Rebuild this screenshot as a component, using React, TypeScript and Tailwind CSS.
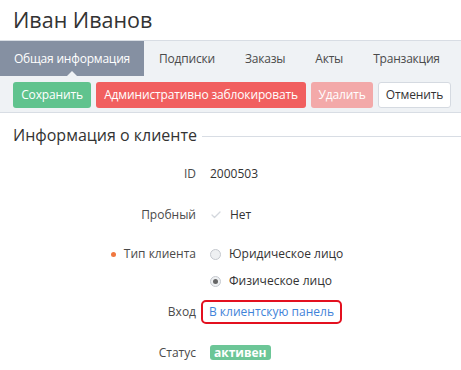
import { Check } from 'lucide-react';

const TABS = ['Общая информация', 'Подписки', 'Заказы', 'Акты', 'Транзакция'];

function Row({ label, required, children, className = '' }: { label: string; required?: boolean; children: React.ReactNode; className?: string }) {
  return (
    <div className={`flex items-start ${className}`}>
      <div className="w-[196px] shrink-0 flex items-center justify-end gap-[8px] text-[12px] text-[#4a4a4a] leading-[20px] whitespace-nowrap">
        {required && <span className="w-[5px] h-[5px] rounded-full bg-[#f0773f]" />}
        {label}
      </div>
      <div className="pl-[14px] text-[12px] text-[#333] leading-[20px] whitespace-nowrap">{children}</div>
    </div>
  );
}

export default function App() {
  return (
    <div className="w-[461px] h-[370px] bg-white overflow-hidden" style={{ fontFamily: '"Open Sans", sans-serif' }}>
      {/* Заголовок */}
      <div className="h-[40px] flex items-center px-[13px] pb-[1px] text-[21.5px] text-[#333] leading-none">Иван Иванов</div>

      {/* Вкладки */}
      <div className="h-[36px] flex border-t border-[#d8dde4] bg-[#eff2f5] whitespace-nowrap text-[12px] tracking-[-0.2px]">
        {TABS.map((t, i) => (
          <div
            key={t}
            className={`relative shrink-0 flex items-center ${i === 0 ? 'w-[144px] justify-center bg-[#8590a2] text-white' : 'text-[#4a4a4a] px-[15px]'}`}
          >
            {t}
            {i === 0 && (
              <span className="absolute bottom-0 left-1/2 -translate-x-1/2 w-0 h-0 border-x-[5px] border-x-transparent border-b-[5px] border-b-[#eff2f5]" />
            )}
          </div>
        ))}
      </div>

      {/* Кнопки */}
      <div className="h-[37px] flex items-start gap-[5px] pt-[6px] px-[13px] bg-[#eff2f5] border-b border-[#d8dde4] whitespace-nowrap text-[12px] tracking-[-0.15px]">
        <button className="shrink-0 w-[78px] h-[26px] rounded-[3px] bg-[#60c38e] text-white">Сохранить</button>
        <button className="shrink-0 w-[210px] h-[26px] rounded-[3px] bg-[#f15f5f] text-white">Административно заблокировать</button>
        <button className="shrink-0 w-[62px] h-[26px] rounded-[3px] bg-[#f3a9a9] text-white">Удалить</button>
        <button className="shrink-0 w-[73px] h-[26px] rounded-[3px] bg-white border border-[#d5dae1] text-[#333]">Отменить</button>
      </div>

      {/* Информация о клиенте */}
      <div className="flex items-center gap-[5px] pl-[13px] pt-[10px]">
        <span className="text-[16px] text-[#333] leading-[24px] whitespace-nowrap">Информация о клиенте</span>
        <div className="flex-1 h-px bg-[#d8dde4] mt-[2px]" />
      </div>

      <div className="pt-[17px]">
        <Row label="ID">2000503</Row>
        <Row label="Пробный" className="mt-[21px]">
          <span className="flex items-center gap-[8px]">
            <Check size={12} strokeWidth={2.5} className="text-[#d3d7dd]" />
            Нет
          </span>
        </Row>
        <Row label="Тип клиента" required className="mt-[19px]">
          <div className="flex flex-col gap-[7px]">
            <label className="flex items-center gap-[8px]">
              <span className="w-[11px] h-[11px] rounded-full border border-[#c5c9cf] bg-[#eef0f2]" />
              Юридическое лицо
            </label>
            <label className="flex items-center gap-[8px]">
              <span className="w-[11px] h-[11px] rounded-full border border-[#c5c9cf] bg-[#eef0f2] flex items-center justify-center">
                <span className="w-[5px] h-[5px] rounded-full bg-[#666]" />
              </span>
              Физическое лицо
            </label>
          </div>
        </Row>
        <Row label="Вход" className="mt-[11px]">
          <a className="-ml-[9px] -my-[2px] inline-block px-[6px] border-2 border-[#e3101f] rounded-[5px] text-[#3f83d9]">В клиентскую панель</a>
        </Row>
        <Row label="Статус" className="mt-[21px]">
          <span className="inline-block px-[4px] rounded-[3px] bg-[#6cc697] text-white text-[12px] font-bold leading-[15px]">активен</span>
        </Row>
      </div>
    </div>
  );
}
